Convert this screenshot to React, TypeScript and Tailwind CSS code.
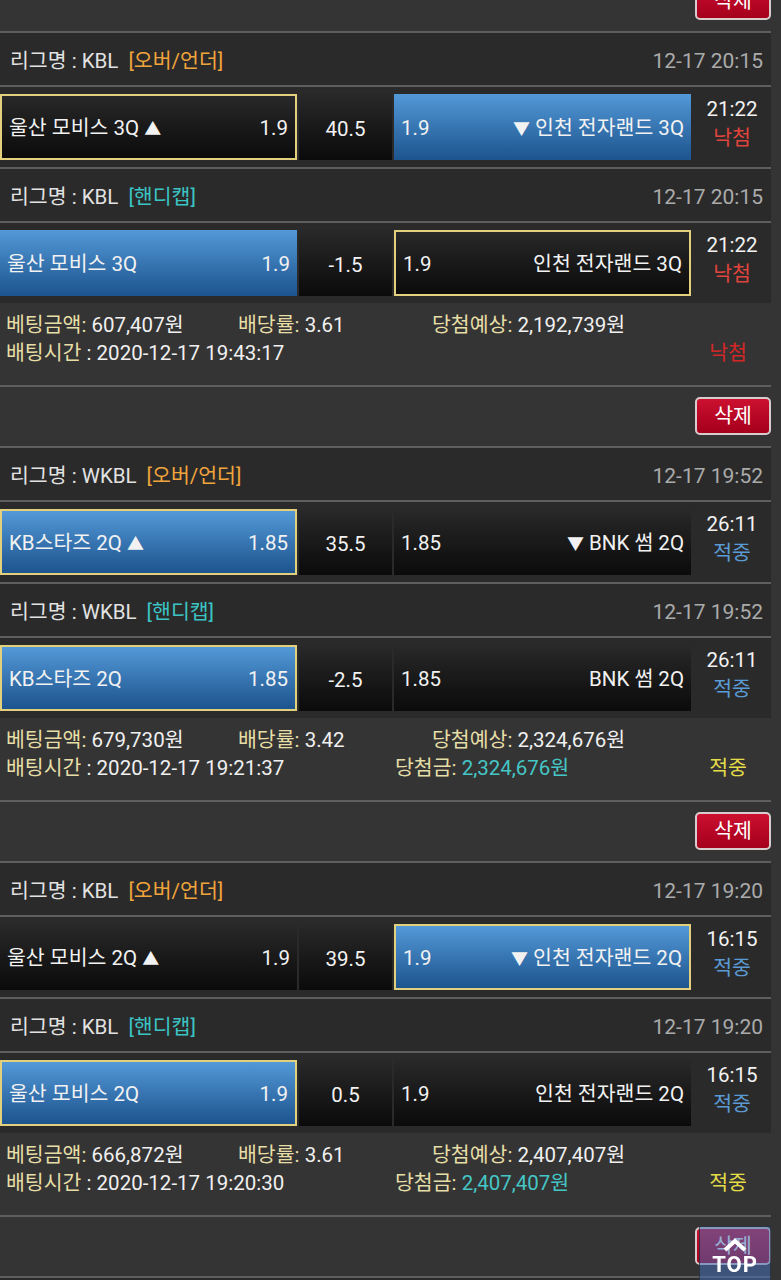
import React from "react"

type Side = { name: string; odds: string; blue?: boolean; picked?: boolean }

type Game = {
  league: string
  kind: "ou" | "hc"
  date: string
  home: Side
  line: string
  away: Side
  clock: string
  result: "win" | "lose"
}

type Bet = {
  games: Game[]
  amount: string
  rate: string
  expect: string
  time: string
  prize?: string
  result: "win" | "lose"
}

const bets: Bet[] = [
  {
    games: [
      {
        league: "KBL",
        kind: "ou",
        date: "12-17 20:15",
        home: { name: "울산 모비스 3Q ▲", odds: "1.9", picked: true },
        line: "40.5",
        away: { name: "▼ 인천 전자랜드 3Q", odds: "1.9", blue: true },
        clock: "21:22",
        result: "lose",
      },
      {
        league: "KBL",
        kind: "hc",
        date: "12-17 20:15",
        home: { name: "울산 모비스 3Q", odds: "1.9", blue: true },
        line: "-1.5",
        away: { name: "인천 전자랜드 3Q", odds: "1.9", picked: true },
        clock: "21:22",
        result: "lose",
      },
    ],
    amount: "607,407원",
    rate: "3.61",
    expect: "2,192,739원",
    time: "2020-12-17 19:43:17",
    result: "lose",
  },
  {
    games: [
      {
        league: "WKBL",
        kind: "ou",
        date: "12-17 19:52",
        home: { name: "KB스타즈 2Q ▲", odds: "1.85", blue: true, picked: true },
        line: "35.5",
        away: { name: "▼ BNK 썸 2Q", odds: "1.85" },
        clock: "26:11",
        result: "win",
      },
      {
        league: "WKBL",
        kind: "hc",
        date: "12-17 19:52",
        home: { name: "KB스타즈 2Q", odds: "1.85", blue: true, picked: true },
        line: "-2.5",
        away: { name: "BNK 썸 2Q", odds: "1.85" },
        clock: "26:11",
        result: "win",
      },
    ],
    amount: "679,730원",
    rate: "3.42",
    expect: "2,324,676원",
    time: "2020-12-17 19:21:37",
    prize: "2,324,676원",
    result: "win",
  },
  {
    games: [
      {
        league: "KBL",
        kind: "ou",
        date: "12-17 19:20",
        home: { name: "울산 모비스 2Q ▲", odds: "1.9" },
        line: "39.5",
        away: { name: "▼ 인천 전자랜드 2Q", odds: "1.9", blue: true, picked: true },
        clock: "16:15",
        result: "win",
      },
      {
        league: "KBL",
        kind: "hc",
        date: "12-17 19:20",
        home: { name: "울산 모비스 2Q", odds: "1.9", blue: true, picked: true },
        line: "0.5",
        away: { name: "인천 전자랜드 2Q", odds: "1.9" },
        clock: "16:15",
        result: "win",
      },
    ],
    amount: "666,872원",
    rate: "3.61",
    expect: "2,407,407원",
    time: "2020-12-17 19:20:30",
    prize: "2,407,407원",
    result: "win",
  },
  {
    games: [
      {
        league: "KBL",
        kind: "ou",
        date: "12-17 19:05",
        home: { name: "울산 모비스 1Q ▲", odds: "1.9" },
        line: "38.5",
        away: { name: "▼ 인천 전자랜드 1Q", odds: "1.9", blue: true, picked: true },
        clock: "19:17",
        result: "win",
      },
    ],
    amount: "500,000원",
    rate: "1.9",
    expect: "950,000원",
    time: "2020-12-17 19:01:12",
    result: "win",
  },
]

function Line() {
  return <div className="h-[2px] bg-[#5e5e5e]" />
}

function DeleteArea({ first }: { first?: boolean }) {
  return (
    <div className={`h-[59px] pt-[10px] flex justify-end ${first ? "-mt-[28px]" : ""}`}>
      <button className="w-[76px] h-[38px] rounded-[5px] border-2 border-[#d9cccc] bg-linear-to-b from-[#cc1030] to-[#a5001c] text-[20.5px] text-white leading-none">
        삭제
      </button>
    </div>
  )
}

function Header({ game }: { game: Game }) {
  return (
    <div className="h-[52px] bg-[#2a2a2a] flex items-center justify-between pt-[5px] pl-[10px] pr-[8px] text-[20.5px]">
      <div className="flex items-center text-[#e2e2e2]">
        <span>리그명 : {game.league}</span>
        {game.kind === "ou" ? (
          <span className="ml-[10px] text-[#f0a43c]">[오버/언더]</span>
        ) : (
          <span className="ml-[10px] text-[#3cc4c4]">[핸디캡]</span>
        )}
      </div>
      <span className="text-[21px] text-[#ababab]">{game.date}</span>
    </div>
  )
}

// the up/down arrows are a bit smaller than the text
function Name({ text }: { text: string }) {
  const parts = text.split(/([▲▼])/)
  return (
    <span>
      {parts.map((p, i) =>
        p === "▲" || p === "▼" ? (
          <span key={i} className="text-[17px]">
            {p}
          </span>
        ) : (
          <span key={i}>{p}</span>
        ),
      )}
    </span>
  )
}

function TeamBox({ side, away }: { side: Side; away?: boolean }) {
  const bg = side.blue
    ? "bg-linear-to-b from-[#5399d8] to-[#1c548e]"
    : "bg-linear-to-b from-[#292929] to-[#0b0b0b]"
  const border = side.picked ? "border-2 border-[#e2d07c]" : ""
  return (
    <div
      className={`w-[297px] h-[66px] flex items-center justify-between px-[7px] pt-[2px] text-[20.5px] text-[#f2f2f2] ${bg} ${border}`}
    >
      {away ? (
        <>
          <span>{side.odds}</span>
          <Name text={side.name} />
        </>
      ) : (
        <>
          <Name text={side.name} />
          <span>{side.odds}</span>
        </>
      )}
    </div>
  )
}

function GameRow({ game }: { game: Game }) {
  return (
    <div className="h-[80px] bg-[#2a2a2a] flex items-center gap-[2px]">
      <TeamBox side={game.home} />
      <div className="w-[93px] h-[66px] flex items-center justify-center pt-[4px] bg-linear-to-b from-[#292929] to-[#0b0b0b] text-[20.5px] text-[#f2f2f2]">
        {game.line}
      </div>
      <TeamBox side={game.away} away />
      <div className="flex-1 self-stretch flex flex-col items-center justify-center pb-[7px] leading-[29px] text-[20.5px]">
        <span className="text-[#f2f2f2]">{game.clock}</span>
        {game.result === "win" ? (
          <span className="text-[#5b9bd5]">적중</span>
        ) : (
          <span className="text-[#e0443c]">낙첨</span>
        )}
      </div>
    </div>
  )
}

function BetBlock({ bet }: { bet: Bet }) {
  return (
    <div>
      {bet.games.map((g, i) => (
        <div key={i}>
          <Line />
          <Header game={g} />
          <Line />
          <GameRow game={g} />
        </div>
      ))}
      <div className="h-[82px] pt-[8px] text-[20.5px] leading-[28px] text-[#f0f0f0]">
        <div className="flex pl-[6px]">
          <div className="w-[232px]">
            <span className="text-[#e6dea6]">베팅금액:</span> {bet.amount}
          </div>
          <div className="w-[194px]">
            <span className="text-[#e6dea6]">배당률:</span> {bet.rate}
          </div>
          <div>
            <span className="text-[#e6dea6]">당첨예상:</span> {bet.expect}
          </div>
        </div>
        <div className="flex pl-[6px]">
          <div className="w-[389px]">
            <span className="text-[#e6dea6]">배팅시간</span> : {bet.time}
          </div>
          <div className="flex-1">
            {bet.prize && (
              <>
                <span className="text-[#e6dea6]">당첨금:</span>{" "}
                <span className="text-[#45c6c6]">{bet.prize}</span>
              </>
            )}
          </div>
          <div className="w-[86px] text-center">
            {bet.result === "win" ? (
              <span className="text-[#e4dc48]">적중</span>
            ) : (
              <span className="text-[#d42626]">낙첨</span>
            )}
          </div>
        </div>
      </div>
      <Line />
    </div>
  )
}

export default function App() {
  return (
    <div className="min-h-screen bg-[#343434] overflow-hidden font-[family-name:Roboto,'Noto_Sans_CJK_KR',sans-serif]">
      <div className="w-[771px]">
        <DeleteArea first />
        {bets.map((b, i) => (
          <div key={i}>
            <BetBlock bet={b} />
            <DeleteArea />
          </div>
        ))}
      </div>

      {/* TOP button */}
      <div className="fixed right-[10px] bottom-[-6px] w-[72px] h-[60px] border border-[#1e1e1e]/60 bg-[rgba(70,110,180,0.55)] flex flex-col items-center pt-[10px]">
        <svg width="28" height="15" viewBox="0 0 28 15" fill="none">
          <polyline points="4,13 14,4 24,13" stroke="white" strokeWidth="4" strokeLinejoin="miter" />
        </svg>
        <span className="text-[22px] font-bold leading-none text-white tracking-[1px] mt-[2px]">TOP</span>
      </div>
    </div>
  )
}
